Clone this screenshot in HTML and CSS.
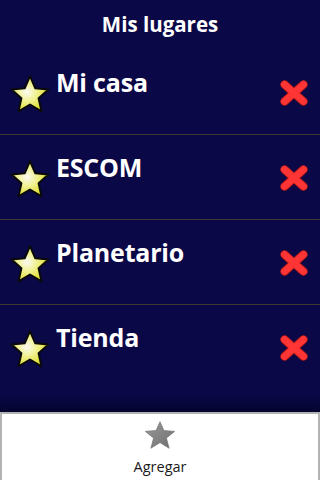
FILE: index.html
```html
<!DOCTYPE html>
<html>
<head>
<meta charset="utf-8">
<link rel="stylesheet" href="styles.css">
</head>
<body>
<div class="screen">
  <header class="title">Mis lugares</header>
  <ul class="list">
    <li class="row">
      <svg class="star" viewBox="0 0 38 38"><use href="#ystar"/></svg>
      <span class="name">Mi casa</span>
      <svg class="del" viewBox="0 0 28 26"><use href="#xmark"/></svg>
    </li>
    <li class="row">
      <svg class="star" viewBox="0 0 38 38"><use href="#ystar"/></svg>
      <span class="name">ESCOM</span>
      <svg class="del" viewBox="0 0 28 26"><use href="#xmark"/></svg>
    </li>
    <li class="row">
      <svg class="star" viewBox="0 0 38 38"><use href="#ystar"/></svg>
      <span class="name">Planetario</span>
      <svg class="del" viewBox="0 0 28 26"><use href="#xmark"/></svg>
    </li>
    <li class="row">
      <svg class="star" viewBox="0 0 38 38"><use href="#ystar"/></svg>
      <span class="name">Tienda</span>
      <svg class="del" viewBox="0 0 28 26"><use href="#xmark"/></svg>
    </li>
  </ul>
  <div class="spacer"></div>
  <nav class="bar">
    <div class="action">
      <svg class="gstar" viewBox="0 0 32 28">
        <defs>
          <linearGradient id="gg" x1="0" y1="0" x2="1" y2="1">
            <stop offset="0" stop-color="#9a9a9a"/>
            <stop offset="1" stop-color="#6e6e6e"/>
          </linearGradient>
        </defs>
        <path d="M16 0.8 L19.9 9.6 L30.6 10.4 L22.4 17.1 L25.1 27.2 L16 21.6 L6.9 27.2 L9.6 17.1 L1.4 10.4 L12.1 9.6 Z" fill="url(#gg)" stroke="#777" stroke-width="0.8" stroke-linejoin="round"/>
      </svg>
      <span class="label">Agregar</span>
    </div>
  </nav>
</div>
<svg width="0" height="0" class="defs">
  <defs>
    <radialGradient id="yg" cx="0.42" cy="0.45" r="0.6">
      <stop offset="0" stop-color="#fafaf4"/>
      <stop offset="0.4" stop-color="#f2f29a"/>
      <stop offset="1" stop-color="#dcdc22"/>
    </radialGradient>
    <path id="ystar" d="M19 1.2 L24.3 13.3 L37.4 14.5 L27.6 23.2 L30.5 36.3 L19 29.5 L7.5 36.3 L10.4 23.2 L0.6 14.5 L13.7 13.3 Z" fill="url(#yg)" stroke="#0a0a0a" stroke-width="2" stroke-linejoin="round"/>
    <g id="xmark">
      <path d="M4.5 4.5 L23.5 21.5 M23.5 4.5 L4.5 21.5" stroke="#b01818" stroke-width="8.5" stroke-linecap="round"/>
      <path d="M4.5 4.5 L23.5 21.5 M23.5 4.5 L4.5 21.5" stroke="#ff3535" stroke-width="7" stroke-linecap="round"/>
    </g>
  </defs>
</svg>
</body>
</html>
```
FILE: styles.css
```css
html, body {
  margin: 0;
  padding: 0;
}
body {
  background: #0b0847;
  font-family: "Open Sans", "DejaVu Sans", sans-serif;
}
.screen {
  width: 320px;
  height: 480px;
  display: flex;
  flex-direction: column;
  overflow: hidden;
}
.title {
  height: 50px;
  line-height: 49px;
  text-align: center;
  color: #fff;
  font-weight: 700;
  font-size: 20.5px;
}
.list {
  list-style: none;
  margin: 0;
  padding: 0;
}
.row {
  height: 84px;
  display: flex;
  align-items: center;
  padding: 0 12px 0 11px;
  border-bottom: 1px solid #3b3a30;
}
.row:last-child {
  border-bottom: none;
}
.star {
  width: 38px;
  height: 38px;
  flex: none;
  margin-top: 4px;
  overflow: visible;
}
.name {
  align-self: flex-start;
  margin-top: 15px;
  margin-left: 7px;
  color: #fff;
  font-weight: 700;
  font-size: 25px;
  letter-spacing: -0.2px;
  flex: 1;
}
.del {
  width: 28px;
  height: 26px;
  flex: none;
  margin-top: 1px;
}
.spacer {
  flex: 1;
  background: linear-gradient(to bottom, #0b0847 0, #0b0847 5px, #040430 100%);
}
.bar {
  height: 66px;
  background: #fff;
  border: 2px solid #b3b3b3;
  border-bottom: none;
  display: flex;
  justify-content: center;
}
.action {
  display: flex;
  flex-direction: column;
  align-items: center;
  padding-top: 7px;
}
.gstar {
  width: 32px;
  height: 28px;
}
.label {
  margin-top: 8px;
  font-size: 14.5px;
  color: #1a1a1a;
}
.defs {
  position: absolute;
}
```
